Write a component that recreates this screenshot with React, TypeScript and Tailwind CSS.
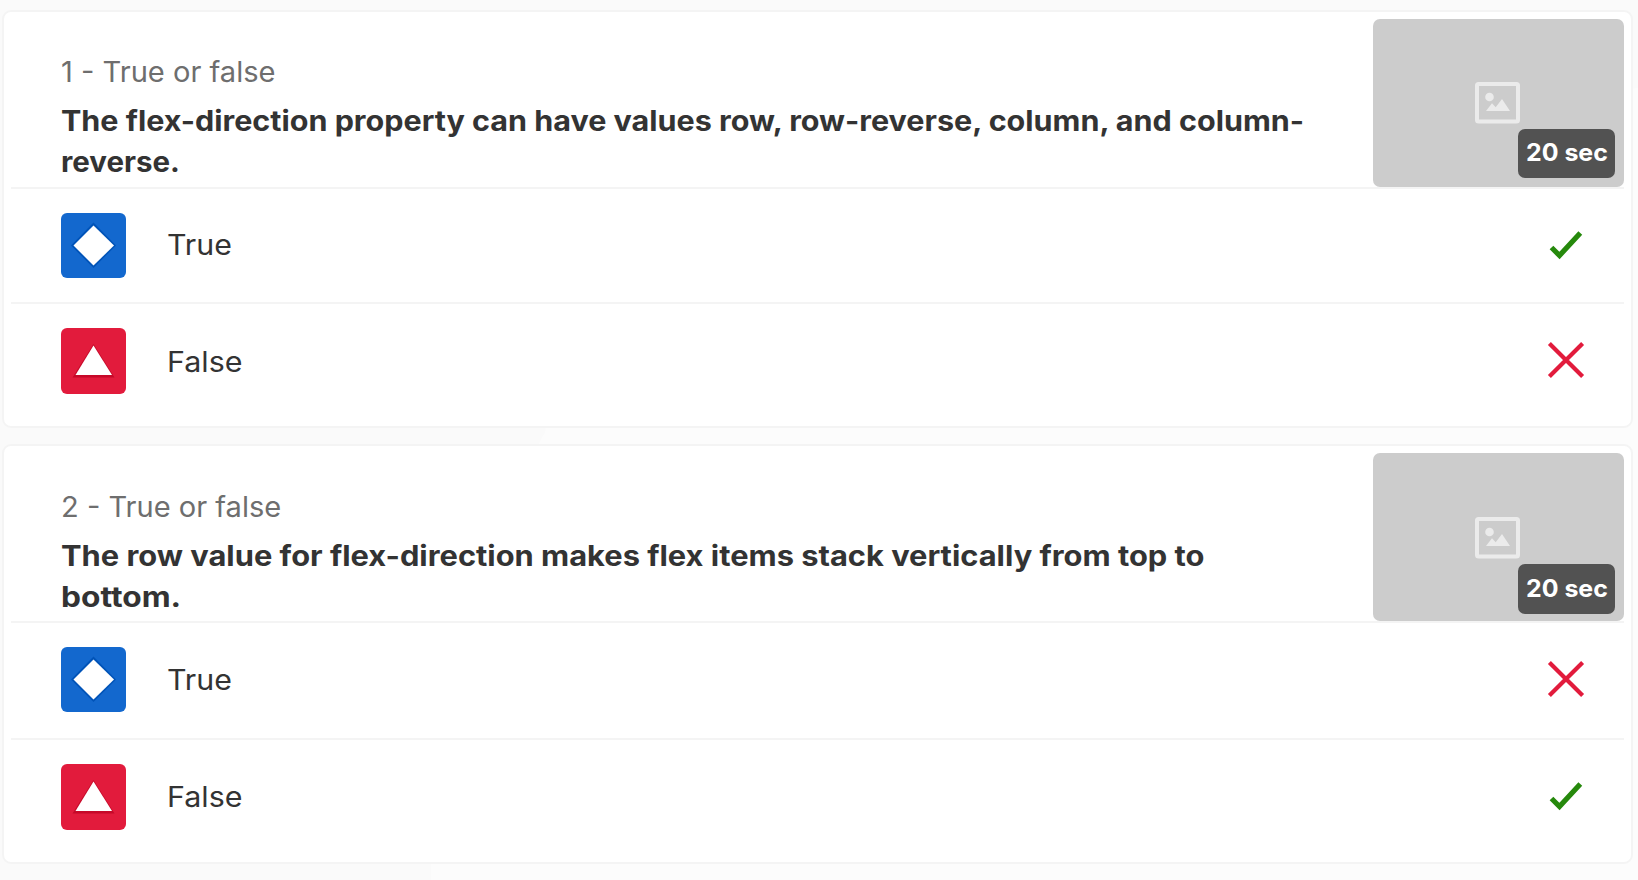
import React from "react";

type Answer = { shape: "diamond" | "triangle"; label: string; correct: boolean };
type Question = {
  title: string;
  titleLength: number;
  lines: { text: string; length: number }[];
  answers: Answer[];
};

const questions: Question[] = [
  {
    title: "1 - True or false",
    titleLength: 215,
    lines: [
      { text: "The flex-direction property can have values row, row-reverse, column, and column-", length: 1243 },
      { text: "reverse.", length: 119 },
    ],
    answers: [
      { shape: "diamond", label: "True", correct: true },
      { shape: "triangle", label: "False", correct: false },
    ],
  },
  {
    title: "2 - True or false",
    titleLength: 220,
    lines: [
      { text: "The row value for flex-direction makes flex items stack vertically from top to", length: 1143 },
      { text: "bottom.", length: 120 },
    ],
    answers: [
      { shape: "diamond", label: "True", correct: false },
      { shape: "triangle", label: "False", correct: true },
    ],
  },
];

function Fit({ text, width }: { text: string; width: number }) {
  const ref = React.useRef<HTMLSpanElement>(null);
  const [scale, setScale] = React.useState(1);
  React.useLayoutEffect(() => {
    if (ref.current) {
      setScale(width / ref.current.offsetWidth);
    }
  }, [text, width]);
  return (
    <span className="inline-block" style={{ width }}>
      <span
        ref={ref}
        className="inline-block origin-left whitespace-nowrap"
        style={{ transform: `scaleX(${scale})` }}
      >
        {text}
      </span>
    </span>
  );
}

function Tile({ shape }: { shape: Answer["shape"] }) {
  if (shape === "diamond") {
    return (
      <div className="h-[65px] w-[65px] shrink-0 rounded-[6px] bg-[#1368ce]">
        <svg width="65" height="65" viewBox="0 0 65 65">
          <path d="M32.500 9.500 55 32.500 32.500 55 10 32.500Z" fill="#0053b8" />
          <path d="M32.500 12.500 53 32.500 32.500 52.500 12.500 32.500Z" fill="#fff" />
        </svg>
      </div>
    );
  }
  return (
    <div className="h-[66px] w-[65px] shrink-0 rounded-[6px] bg-[#e21b3c]">
      <svg width="65" height="66" viewBox="0 0 65 66">
        <path d="M32.500 16 53.500 49.500H11.500Z" fill="#c60929" />
        <path d="M32.500 17.500 51 47H14.500Z" fill="#fff" />
      </svg>
    </div>
  );
}

function Mark({ correct }: { correct: boolean }) {
  return correct ? (
    <svg width="36" height="36" viewBox="0 0 36 36" fill="none">
      <path d="M3.500 19.500 11.500 27.500 32.300 5" stroke="#26890c" strokeWidth="5.200" />
    </svg>
  ) : (
    <svg className="mb-[2px] overflow-visible" width="36" height="36" viewBox="0 0 36 36" fill="none">
      <path d="M1.400 1.400 34.600 34.600M34.600 1.400 1.400 34.600" stroke="#e21b3c" strokeWidth="4.200" />
    </svg>
  );
}

function Card({ question, second }: { question: Question; second: boolean }) {
  return (
    <section
      className={`relative w-[1631px] rounded-[9px] border-2 border-[#f4f4f4] bg-white px-[7px] pt-[7px] ${
        second ? "h-[420px]" : "h-[418px]"
      }`}
    >
      <header className="flex h-[168px] justify-between pl-[50px]">
        <div className={second ? "pt-[32px]" : "pt-[31px]"}>
          <p className="h-[44px] text-[28px] leading-[44px] text-[#6e6e6e]">
            <Fit text={question.title} width={question.titleLength} />
          </p>
          <h2 className="mt-[7px] text-[28px] leading-[41px] font-bold text-[#333333]">
            {question.lines.map((line) => (
              <span key={line.text} className="block h-[41px]">
                <Fit text={line.text} width={line.length} />
              </span>
            ))}
          </h2>
        </div>
        <div className="relative h-[168px] w-[251px] shrink-0 rounded-[7px] bg-[#cccccc]">
          <svg
            className={`absolute left-[102px] ${second ? "top-[64px]" : "top-[63px]"}`}
            width="46"
            height="42"
            viewBox="0 0 46 42"
          >
            <rect x="2" y="2" width="41" height="37.500" rx="1.500" fill="none" stroke="#ebebeb" strokeWidth="4" />
            <circle cx="14.500" cy="15" r="4.300" fill="#ebebeb" />
            <path d="M11 29 17 21.200 20.700 25.200 27 17 35 29Z" fill="#ebebeb" />
          </svg>
          <div
            className={`absolute right-[9px] flex w-[97px] items-center justify-center rounded-[7px] bg-[#525252] text-[24px] font-bold text-white ${
              second ? "top-[111px] h-[50px]" : "top-[110px] h-[49px] pb-[1px]"
            }`}
          >
            <Fit text="20 sec" width={82} />
          </div>
        </div>
      </header>
      {question.answers.map((answer, i) => (
        <div
          key={answer.label}
          className={`flex items-center border-t-2 border-[#f4f4f4] pr-[40px] pl-[50px] ${
            i === 0 && !second ? "h-[115px]" : "h-[117px] pb-[2px]"
          }`}
        >
          <Tile shape={answer.shape} />
          <span
            className={`ml-[41px] flex-1 text-[28px] leading-[40px] text-[#333333] ${
              i === 0 && !second ? "pb-[2px]" : ""
            } ${i === 1 && !second ? "pt-[2px]" : ""}`}
          >
            <Fit text={answer.label} width={i === 0 ? 65 : 75} />
          </span>
          <Mark correct={answer.correct} />
        </div>
      ))}
    </section>
  );
}

export default function App() {
  return (
    <main className="relative h-[880px] w-[1638px] overflow-hidden bg-[#fcfcfc] font-['Inter',sans-serif]">
      <svg className="absolute inset-0" width="1638" height="880">
        <path d="M0 0H1638V88L1600 90H600L545 432 537 447 431 862V880H0Z" fill="#fafafa" />
      </svg>
      <div className="relative flex flex-col gap-[16px] pt-[10px] pl-[2px]">
        {questions.map((question, i) => (
          <Card key={question.title} question={question} second={i === 1} />
        ))}
      </div>
    </main>
  );
}
